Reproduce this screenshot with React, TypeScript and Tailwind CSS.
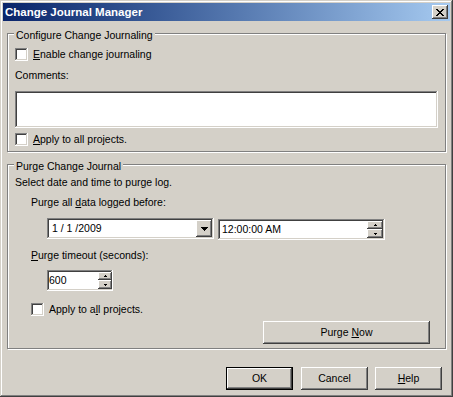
const raised =
  'shadow-[inset_-1px_-1px_#404040,inset_1px_1px_#ffffff,inset_-2px_-2px_#808080,inset_2px_2px_#d4d0c8]';
const sunken =
  'shadow-[inset_-1px_-1px_#ffffff,inset_1px_1px_#808080,inset_-2px_-2px_#d4d0c8,inset_2px_2px_#404040]';

function Check() {
  return <div className={`w-[13px] h-[13px] bg-white shrink-0 ${sunken}`} />;
}

function GroupBox({ title, className, children }: { title: string; className: string; children: React.ReactNode }) {
  return (
    <div className={`relative border border-[#808080] shadow-[inset_1px_1px_0_#ffffff,1px_1px_0_#ffffff] ${className}`}>
      <span className="absolute left-[6px] top-[-5px] bg-[#d4d0c8] px-[2px] leading-[13px] whitespace-nowrap">{title}</span>
      {children}
    </div>
  );
}

function UpArrow() {
  return (
    <svg width="3" height="2" shapeRendering="crispEdges">
      <path d="M1 0h1v1H1zM0 1h3v1H0z" fill="#000" />
    </svg>
  );
}

function DownArrow() {
  return (
    <svg width="3" height="2" shapeRendering="crispEdges">
      <path d="M0 0h3v1H0zM1 1h1v1H1z" fill="#000" />
    </svg>
  );
}

function Spinner({ w }: { w: string }) {
  return (
    <div className={`flex flex-col shrink-0 ${w}`}>
      <div className={`h-[8px] bg-[#d4d0c8] flex items-center justify-center ${raised}`}>
        <UpArrow />
      </div>
      <div className={`h-[9px] bg-[#d4d0c8] flex items-center justify-center ${raised}`}>
        <DownArrow />
      </div>
    </div>
  );
}

function Button({ children, isDefault, className }: { children: React.ReactNode; isDefault?: boolean; className?: string }) {
  if (isDefault) {
    return (
      <div className={`border border-black ${className}`}>
        <div className={`h-full flex items-center justify-center bg-[#d4d0c8] ${raised}`}>{children}</div>
      </div>
    );
  }
  return <div className={`flex items-center justify-center bg-[#d4d0c8] ${raised} ${className}`}>{children}</div>;
}

export default function App() {
  return (
    <div
      className={`w-[453px] h-[397px] bg-[#d4d0c8] p-[3px] text-[10.5px] leading-[13px] text-black font-['Liberation_Sans',Arial,sans-serif] shadow-[inset_-1px_-1px_#404040,inset_1px_1px_#d4d0c8,inset_-2px_-2px_#808080,inset_2px_2px_#ffffff]`}
    >
      {/* Title bar */}
      <div className="h-[18px] flex items-center justify-between bg-linear-to-r from-[#0a246a] to-[#a6caf0]">
        <span className="pl-[2px] text-white font-bold text-[11.5px] whitespace-nowrap">Change Journal Manager</span>
        <div className={`w-[16px] h-[14px] mr-[2px] bg-[#d4d0c8] flex items-center justify-center ${raised}`}>
          <svg width="8" height="7" shapeRendering="crispEdges">
            <path
              d="M0 0h2v1H0zM6 0h2v1H6zM1 1h2v1H1zM5 1h2v1H5zM2 2h4v1H2zM3 3h2v1H3zM2 4h4v1H2zM1 5h2v1H1zM5 5h2v1H5zM0 6h2v1H0zM6 6h2v1H6z"
              fill="#000"
            />
          </svg>
        </div>
      </div>

      <div className="px-[4px] pt-[12px]">
        {/* Configure */}
        <GroupBox title="Configure Change Journaling" className="h-[119px] pt-[14px] px-[7px]">
          <div className="flex items-center gap-[5px] h-[13px]">
            <Check />
            <span>
              <span className="underline">E</span>nable change journaling
            </span>
          </div>
          <div className="mt-[8px]">Comments:</div>
          <div className={`mt-[9px] h-[37px] bg-white ${sunken}`} />
          <div className="mt-[5px] flex items-center gap-[5px] h-[13px]">
            <Check />
            <span>
              <span className="underline">A</span>pply to all projects.
            </span>
          </div>
        </GroupBox>

        {/* Purge */}
        <GroupBox title="Purge Change Journal" className="mt-[12px] h-[185px] pt-[11px] px-[7px]">
          <div>Select date and time to purge log.</div>
          <div className="mt-[7px] ml-[16px]">
            Purge all <span className="underline">d</span>ata logged before:
          </div>
          <div className="mt-[9px] ml-[32px] flex items-start gap-[4px] h-[22px]">
            <div className={`w-[167px] h-[21px] bg-white p-[2px] flex items-center ${sunken}`}>
              <span className="flex-1 pl-[3px] whitespace-pre">1 / 1 /2009</span>
              <div className={`w-[16px] h-[17px] bg-[#d4d0c8] flex items-center justify-center ${raised}`}>
                <svg width="7" height="4" shapeRendering="crispEdges">
                  <path d="M0 0h7v1H0zM1 1h5v1H1zM2 2h3v1H2zM3 3h1v1H3z" fill="#000" />
                </svg>
              </div>
            </div>
            <div className={`mt-[1px] w-[167px] h-[21px] bg-white p-[2px] flex items-center ${sunken}`}>
              <span className="flex-1 pl-[2px]">12:00:00 AM</span>
              <Spinner w="w-[16px]" />
            </div>
          </div>
          <div className="mt-[9px] ml-[16px]">
            <span className="underline">P</span>urge timeout (seconds):
          </div>
          <div className={`mt-[8px] ml-[32px] w-[66px] h-[21px] bg-white py-[2px] pl-[2px] pr-[1px] flex items-center ${sunken}`}>
            <span className="flex-1">600</span>
            <Spinner w="w-[14px]" />
          </div>
          <div className="mt-[12px] ml-[16px] flex items-center gap-[5px] h-[13px]">
            <Check />
            <span>
              Apply to a<span className="underline">l</span>l projects.
            </span>
          </div>
          <Button className="mt-[5px] ml-[248px] w-[167px] h-[23px]">
            <span>
              Purge <span className="underline">N</span>ow
            </span>
          </Button>
        </GroupBox>

        {/* Dialog buttons */}
        <div className="mt-[18px] flex justify-end pr-[4px]">
          <Button isDefault className="w-[67px] h-[23px]">
            OK
          </Button>
          <Button className="ml-[8px] w-[67px] h-[23px]">Cancel</Button>
          <Button className="ml-[7px] w-[67px] h-[23px]">
            <span>
              <span className="underline">H</span>elp
            </span>
          </Button>
        </div>
      </div>
    </div>
  );
}
